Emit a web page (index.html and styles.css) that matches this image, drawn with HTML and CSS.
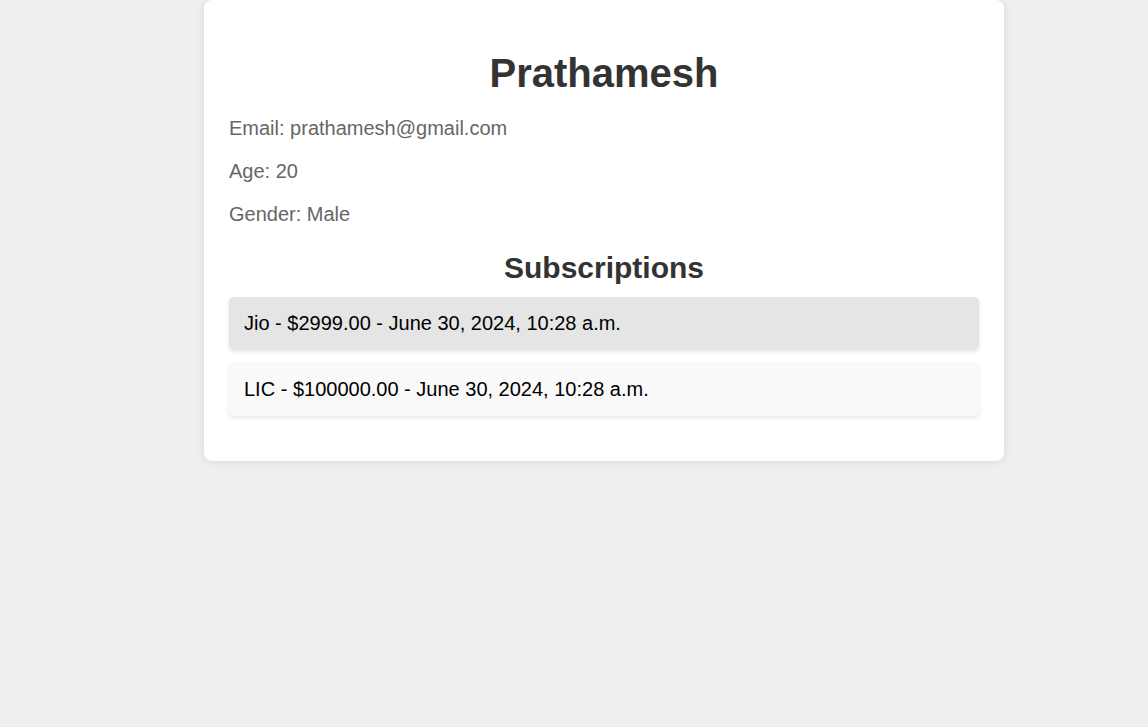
FILE: index.html
```html
<!DOCTYPE html>
<html lang="en">
<head>
<meta charset="utf-8">
<title>Prathamesh</title>
<link rel="stylesheet" href="styles.css">
</head>
<body>
<div class="page">
  <div class="card">
    <h1 class="name">Prathamesh</h1>
    <p class="info">Email: prathamesh@gmail.com</p>
    <p class="info">Age: 20</p>
    <p class="info">Gender: Male</p>
    <h2 class="section-title">Subscriptions</h2>
    <ul class="subs">
      <li class="sub sub-active">Jio - $2999.00 - June 30, 2024, 10:28 a.m.</li>
      <li class="sub">LIC - $100000.00 - June 30, 2024, 10:28 a.m.</li>
    </ul>
  </div>
</div>
</body>
</html>
```

FILE: styles.css
```css
html, body {
  margin: 0;
  padding: 0;
  background: #efefef;
  font-family: "Liberation Sans", Arial, sans-serif;
}

.page {
  padding-left: 60px;
  min-height: 727px;
  box-sizing: border-box;
}

.card {
  width: 800px;
  box-sizing: border-box;
  margin: 0 auto;
  background: #ffffff;
  border-radius: 8px;
  padding: 0 25px 25px;
  box-shadow: 0 0 10px rgba(0, 0, 0, 0.1);
  overflow: hidden;
}

.name {
  font-size: 40px;
  font-weight: bold;
  color: #333333;
  text-align: center;
  margin: 50px 0 21px;
  line-height: 46px;
}

.info {
  font-size: 20px;
  line-height: 23px;
  color: #666666;
  margin: 20px 0;
}

.section-title {
  font-size: 30px;
  font-weight: bold;
  color: #333333;
  text-align: center;
  line-height: 34px;
  margin: 25px 0 12px;
}

.subs {
  list-style: none;
  margin: 0 0 20px;
  padding: 0;
  display: flex;
  flex-direction: column;
  gap: 13px;
}

.sub {
  background: #f9f9f9;
  border-radius: 5px;
  padding: 15px;
  font-size: 20px;
  line-height: 23px;
  color: #000000;
  box-shadow: 0 2px 4px rgba(0, 0, 0, 0.1);
}

.sub-active {
  background: #e5e5e5;
}
```
